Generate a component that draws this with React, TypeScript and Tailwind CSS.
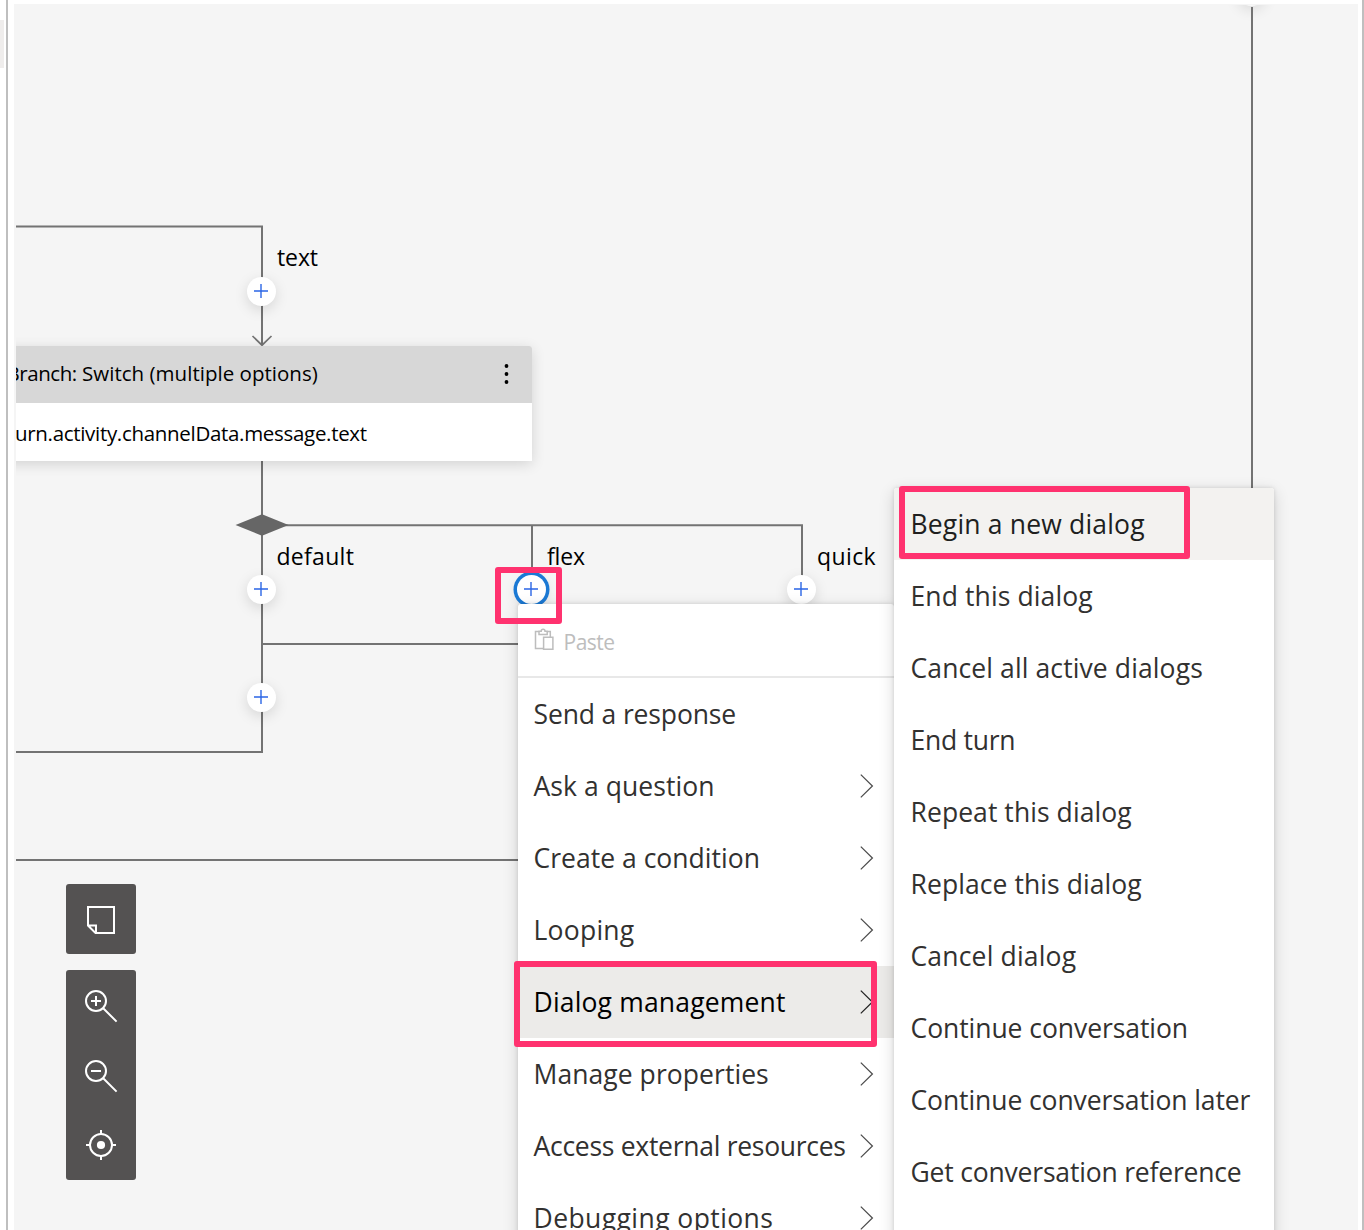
import type { ReactNode } from "react";

type Item = { label: string; tracking: string; arrow?: boolean; active?: boolean };

const actionItems: Item[] = [
  { label: "Send a response", tracking: "tracking-[-0.14px]" },
  { label: "Ask a question", tracking: "tracking-[0.06px]", arrow: true },
  { label: "Create a condition", tracking: "tracking-[0.02px]", arrow: true },
  { label: "Looping", tracking: "tracking-[0.25px]", arrow: true },
  { label: "Dialog management", tracking: "tracking-[0.17px]", arrow: true, active: true },
  { label: "Manage properties", tracking: "tracking-[0.06px]", arrow: true },
  { label: "Access external resources", tracking: "tracking-[-0.28px]", arrow: true },
  { label: "Debugging options", tracking: "tracking-[0.42px]", arrow: true },
];

const dialogItems: Item[] = [
  { label: "Begin a new dialog", tracking: "tracking-[0.18px]", active: true },
  { label: "End this dialog", tracking: "tracking-[0.11px]" },
  { label: "Cancel all active dialogs", tracking: "tracking-[0.11px]" },
  { label: "End turn", tracking: "tracking-[-0.25px]" },
  { label: "Repeat this dialog", tracking: "tracking-[0.07px]" },
  { label: "Replace this dialog", tracking: "tracking-[0.07px]" },
  { label: "Cancel dialog", tracking: "tracking-[0.18px]" },
  { label: "Continue conversation", tracking: "tracking-[-0.06px]" },
  { label: "Continue conversation later", tracking: "tracking-[-0.09px]" },
  { label: "Get conversation reference", tracking: "tracking-[-0.19px]" },
];

function Chevron({ active }: { active?: boolean }) {
  return (
    <svg
      className={`mr-5 h-6 w-[14px] shrink-0 ${active ? "text-[#222]" : "text-[#4c4c4c]"}`}
      viewBox="0 0 14 24"
      fill="none"
      stroke="currentColor"
      strokeWidth="1.25"
    >
      <path d="M0.8 0.6 12.4 12 0.8 23.4" />
    </svg>
  );
}

function PlusNode({ place, focused }: { place: string; focused?: boolean }) {
  return (
    <button
      className={`absolute flex size-[29px] items-center justify-center rounded-full bg-white shadow-[0_4px_14px_rgba(0,0,0,0.13)] ${place} ${focused ? "ring-[3.5px] ring-[#1b79d4]" : ""}`}
    >
      <svg className="mr-px mb-px size-[14px]" viewBox="0 0 14 14" stroke="#2b66e6" strokeWidth="1.4">
        <path d="M0 7h14M7 0v14" />
      </svg>
    </button>
  );
}

function EdgeLabel({ place, children }: { place: string; children: ReactNode }) {
  return <span className={`absolute text-[23px] leading-8 text-black ${place}`}>{children}</span>;
}

function Connectors() {
  return (
    <svg className="absolute inset-0" width="1364" height="1230" fill="none" stroke="#737373" strokeWidth="2">
      <path d="M16 226.4H262V345" />
      <path d="M252.5 336 262 345.2 271.5 336" strokeWidth="1.7" />
      <path d="M262 461V752H16" />
      <path d="M262 525.2H802V590M532 525V590" />
      <path d="M262 644H532M16 860H532" />
      <path d="M1252 7V500" />
      <path d="M235.5 525 262 514.3 288.5 525 262 535.7Z" fill="#666" stroke="none" />
    </svg>
  );
}

function SwitchCard() {
  return (
    <div className="absolute top-[346px] left-4 w-[540px]">
      <div className="-ml-6 w-[540px] rounded-t-[3px] bg-white text-[20.5px] whitespace-nowrap text-black shadow-[0_3px_14px_rgba(0,0,0,0.14)]">
        <div className="flex h-[57px] items-center justify-between rounded-t-[3px] bg-[#d7d7d7] pr-[23px] pb-[3px] pl-[14.5px]">
          <span className="tracking-[0.02px]">
            <span className="tracking-[-0.45px]">Branch:</span> Switch (multiple options)
          </span>
          <svg className="mt-[2px] h-[22px] w-[5px]" viewBox="0 0 5 22" fill="#000">
            <circle cx="2.5" cy="3" r="1.9" />
            <circle cx="2.5" cy="11" r="1.9" />
            <circle cx="2.5" cy="19" r="1.9" />
          </svg>
        </div>
        <div className="flex h-[58px] items-center pt-[3px] pl-4">
          <span className="tracking-[-0.31px]">turn.activity.channelData.message.text</span>
        </div>
      </div>
    </div>
  );
}

function Toolbar() {
  const button = "flex size-[70px] items-center justify-center text-white";
  const icon = "size-9";
  return (
    <div className="absolute top-[884px] left-[66px] flex flex-col gap-4">
      <div className="rounded-[3px] bg-[#545252]">
        <button className={button}>
          <svg className={icon} viewBox="0 0 36 36" fill="none" stroke="currentColor" strokeWidth="2">
            <path d="M5 6H31V32H12.5L5 24.5ZM5 24.5H13V32" />
          </svg>
        </button>
      </div>
      <div className="flex flex-col rounded-[3px] bg-[#545252]">
        <button className={button}>
          <svg className={icon} viewBox="0 0 36 36" fill="none" stroke="currentColor" strokeWidth="2">
            <circle cx="13" cy="14" r="10" />
            <path d="M20.2 21.2 33.6 34.6M8 14H18M13 9V19" />
          </svg>
        </button>
        <button className={button}>
          <svg className={icon} viewBox="0 0 36 36" fill="none" stroke="currentColor" strokeWidth="2">
            <circle cx="13" cy="14" r="10" />
            <path d="M20.2 21.2 33.6 34.6M8 14H18" />
          </svg>
        </button>
        <button className={button}>
          <svg className={icon} viewBox="0 0 36 36" fill="none" stroke="currentColor" strokeWidth="2">
            <circle cx="18" cy="18" r="11" />
            <circle cx="18" cy="18" r="4.1" fill="currentColor" stroke="none" />
            <path d="M18 3V7M18 29V33M3 18H7M29 18H33" />
          </svg>
        </button>
      </div>
    </div>
  );
}

function MenuRow({ item, rowClass, activeClass }: { item: Item; rowClass: string; activeClass: string }) {
  return (
    <li
      className={`flex h-[72px] items-center justify-between whitespace-nowrap ${rowClass} ${item.active ? activeClass : "text-[#323130]"}`}
    >
      <span className={`pt-[2px] text-[26.5px] ${item.tracking}`}>{item.label}</span>
      {item.arrow && <Chevron active={item.active} />}
    </li>
  );
}

function ActionMenu() {
  return (
    <div className="absolute top-[604px] left-[518px] w-[376px] rounded-[3px] bg-white shadow-[0_4px_16px_rgba(0,0,0,0.16),0_0_4px_rgba(0,0,0,0.12)]">
      <div className="flex h-[72px] items-center pl-4 text-[#bdbdbd]">
        <svg className="-mt-[2px] h-[24px] w-5" viewBox="0 0 20 24" fill="none" stroke="currentColor" strokeWidth="1.5">
          <path d="M9 21.5H1.5V4.5H5M13 4.5H16.3V10M5 7.6V4.3H7.2C7.2 1.5 11 1.5 11 4.3H13.2V7.6Z" />
          <path d="M9.6 10.2H18.9V22.3H9.6Z" />
        </svg>
        <span className="mt-[6px] ml-[9.5px] text-[21px] tracking-[-0.5px]">Paste</span>
      </div>
      <div className="h-[2px] bg-[#e8e8e8]" />
      <ul>
        {actionItems.map((item) => (
          <MenuRow key={item.label} item={item} rowClass="pl-[15.5px]" activeClass="bg-[#ecebe9] text-black" />
        ))}
      </ul>
    </div>
  );
}

function DialogMenu() {
  return (
    <div className="absolute top-[488px] left-[894px] h-[760px] w-[380px] rounded-[3px] bg-white shadow-[0_4px_16px_rgba(0,0,0,0.16),0_0_4px_rgba(0,0,0,0.12)]">
      <ul>
        {dialogItems.map((item) => (
          <MenuRow
            key={item.label}
            item={item}
            rowClass="pl-[16.5px]"
            activeClass="rounded-t-[3px] bg-[#f3f2f0] text-[#201f1e]"
          />
        ))}
      </ul>
    </div>
  );
}

export default function App() {
  return (
    <div className="relative flex h-[1230px] w-[1364px] overflow-hidden bg-white font-['Open_Sans','Noto_Sans',sans-serif]">
      <div className="w-2 shrink-0 border-r-2 border-[#bfbfbf] pt-5">
        <div className="h-12 w-1 bg-[#efedec]" />
      </div>
      <main className="mt-1 ml-[6px] flex-1 bg-[#f5f5f5]" />
      <div className="ml-1 w-[2px] shrink-0 bg-[#bfbfbf]" />

      <div className="absolute inset-0 [clip-path:inset(5px_6px_0_16px)]">
        <div className="absolute -top-[23px] left-[1237px] size-[29px] rounded-full bg-[#f9f9f9] shadow-[0_4px_14px_rgba(0,0,0,0.11)]" />
        <Connectors />
        <SwitchCard />
        <EdgeLabel place="left-[277px] top-[241px] tracking-[-0.1px]">text</EdgeLabel>
        <EdgeLabel place="left-[276.5px] top-[540px] tracking-[0.3px]">default</EdgeLabel>
        <EdgeLabel place="left-[547px] top-[540px] tracking-[-0.15px]">flex</EdgeLabel>
        <EdgeLabel place="left-[817px] top-[540px] tracking-[0.4px]">quick</EdgeLabel>
        <PlusNode place="left-[247px] top-[277px]" />
        <PlusNode place="left-[247px] top-[575px]" />
        <PlusNode place="left-[247px] top-[683px]" />
        <PlusNode place="left-[517px] top-[575px]" focused />
        <PlusNode place="left-[787px] top-[575px]" />
        <Toolbar />
      </div>

      <ActionMenu />
      <DialogMenu />

      <div className="absolute top-[567px] left-[495px] h-[57px] w-[66.5px] rounded-[3px] border-6 border-[#ff326f]" />
      <div className="absolute top-[961px] left-[514px] h-[86px] w-[363px] rounded-[3px] border-6 border-[#ff326f]" />
      <div className="absolute top-[486px] left-[899px] h-[73px] w-[291px] rounded-[3px] border-6 border-[#ff326f]" />
    </div>
  );
}
